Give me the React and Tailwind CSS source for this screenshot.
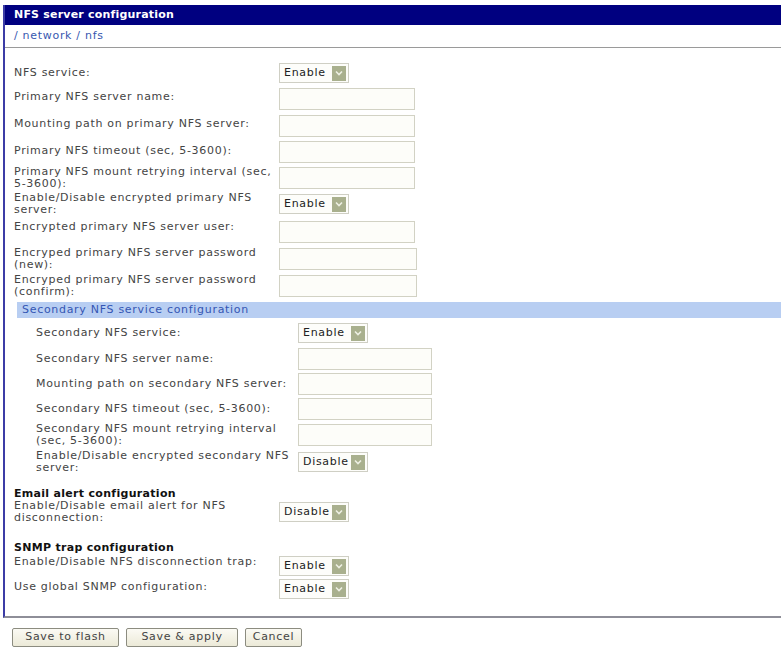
import React from "react";

const font = { fontFamily: '"DejaVu Sans", Verdana, sans-serif' };

function Select({ value }) {
  return (
    <div className="flex h-[20px] w-[70px] items-center justify-between border border-[#cfcfc4] bg-[#fdfdfa] pl-[4px] pr-[2px]">
      <span className="text-[11px] text-[#222]">{value}</span>
      <span className="flex h-[15px] w-[14px] items-center justify-center bg-[#a9b08e]">
        <svg width="8" height="6" viewBox="0 0 8 6">
          <path d="M1 1.5 L4 4.5 L7 1.5" fill="none" stroke="#eef0e4" strokeWidth="1.6" />
        </svg>
      </span>
    </div>
  );
}

function Input({ w = "w-[136px]" }) {
  return <div className={`h-[22px] ${w} border border-[#d2d2c4] bg-[#fdfdf9]`} />;
}

function Row({ h, label, children, lift = "" }) {
  return (
    <div className={`flex items-center ${h}`}>
      <div className={`w-[265px] shrink-0 pr-[6px] text-[11px] leading-[12px] text-[#444] ${lift}`}>{label}</div>
      {children}
    </div>
  );
}

function SubRow({ h, label, children }) {
  return (
    <div className={`flex items-center pl-[22px] ${h}`}>
      <div className="w-[262px] shrink-0 pr-[4px] text-[11px] leading-[12px] text-[#444]">{label}</div>
      {children}
    </div>
  );
}

function Button({ children, w }) {
  return (
    <div
      className={`flex h-[19px] ${w} items-center justify-center rounded-[2px] border border-[#8c8c80] bg-gradient-to-b from-[#fbfaf4] to-[#ecead8] text-[11px] text-[#444]`}
    >
      {children}
    </div>
  );
}

export default function App() {
  return (
    <div className="min-h-[648px] bg-white pl-[3px] pt-[5px] tracking-[0.7px]" style={font}>
      <div className="border-b-2 border-l-2 border-b-[#8e8e98] border-l-[#3c3ca6]">
        <div className="flex h-[20px] items-center bg-[#000080] pl-[9px] text-[11px] font-bold tracking-[0.2px] text-white">
          NFS server configuration
        </div>
        <div className="flex h-[23px] items-center border-b border-[#9a9a9a] pl-[9px] text-[11px] text-[#3858b0]">
          / network / nfs
        </div>

        <div className="pl-[9px] pt-[12px]">
          <Row h="h-[26px]" label="NFS service:">
            <Select value="Enable" />
          </Row>
          <Row h="h-[26px]" label="Primary NFS server name:" lift="-mt-[4px]">
            <Input />
          </Row>
          <Row h="h-[27px]" label="Mounting path on primary NFS server:" lift="-mt-[3px]">
            <Input />
          </Row>
          <Row h="h-[26px]" label="Primary NFS timeout (sec, 5-3600):" lift="-mt-[3px]">
            <Input />
          </Row>
          <Row h="h-[25px]" label="Primary NFS mount retrying interval (sec, 5-3600):">
            <Input />
          </Row>
          <Row h="h-[28px]" label="Enable/Disable encrypted primary NFS server:">
            <Select value="Enable" />
          </Row>
          <Row h="h-[28px]" label="Encrypted primary NFS server user:" lift="-mt-[10px]">
            <Input />
          </Row>
          <Row h="h-[26px]" label="Encryped primary NFS server password (new):">
            <Input w="w-[138px]" />
          </Row>
          <Row h="h-[27px]" label="Encryped primary NFS server password (confirm):">
            <Input w="w-[138px]" />
          </Row>
        </div>

        <div className="ml-[12px] mt-[3px] flex h-[16px] items-center bg-[#b8cef2] pl-[5px] text-[11px] text-[#3456b4]">
          Secondary NFS service configuration
        </div>

        <div className="pl-[9px] pt-[2px]">
          <SubRow h="h-[26px]" label="Secondary NFS service:">
            <Select value="Enable" />
          </SubRow>
          <SubRow h="h-[25px]" label="Secondary NFS server name:">
            <Input w="w-[134px]" />
          </SubRow>
          <SubRow h="h-[25px]" label="Mounting path on secondary NFS server:">
            <Input w="w-[134px]" />
          </SubRow>
          <SubRow h="h-[25px]" label="Secondary NFS timeout (sec, 5-3600):">
            <Input w="w-[134px]" />
          </SubRow>
          <SubRow h="h-[27px]" label="Secondary NFS mount retrying interval (sec, 5-3600):">
            <Input w="w-[134px]" />
          </SubRow>
          <SubRow h="h-[28px]" label="Enable/Disable encrypted secondary NFS server:">
            <Select value="Disable" />
          </SubRow>

          <div className="mt-[12px] text-[11px] font-bold leading-[12px] tracking-[0.3px] text-[#111]">Email alert configuration</div>
          <Row h="h-[24px]" label="Enable/Disable email alert for NFS disconnection:">
            <Select value="Disable" />
          </Row>

          <div className="mt-[18px] text-[11px] font-bold leading-[12px] tracking-[0.3px] text-[#111]">SNMP trap configuration</div>
          <Row h="h-[24px]" label="Enable/Disable NFS disconnection trap:" lift="-mt-[9px]">
            <Select value="Enable" />
          </Row>
          <Row h="h-[22px]" label="Use global SNMP configuration:" lift="-mt-[4px]">
            <Select value="Enable" />
          </Row>
          <div className="h-[16px]" />
        </div>
      </div>

      <div className="ml-[9px] mt-[10px] flex gap-[7px]">
        <Button w="w-[107px]">Save to flash</Button>
        <Button w="w-[112px]">Save &amp; apply</Button>
        <Button w="w-[57px]">Cancel</Button>
      </div>
    </div>
  );
}
